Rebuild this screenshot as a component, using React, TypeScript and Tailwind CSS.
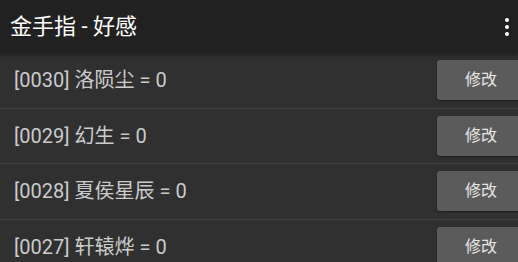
import React from 'react';

const ITEMS = [
  { id: '0030', name: '洛陨尘', value: 0 },
  { id: '0029', name: '幻生', value: 0 },
  { id: '0028', name: '夏侯星辰', value: 0 },
  { id: '0027', name: '轩辕烨', value: 0 },
];

const App: React.FC = () => {
  return (
    <div
      className="h-[262px] w-[518px] overflow-hidden bg-[#303030]"
      style={{ fontFamily: 'Roboto, "Noto Sans CJK SC", sans-serif' }}
    >
      <div className="relative z-10 flex h-[53px] items-center justify-between bg-[#212121] pl-[10px] pr-[9px] shadow-[0_2px_4px_rgba(0,0,0,0.35)]">
        <h1 className="text-[22px] text-white">金手指 - 好感</h1>
        <div className="flex flex-col gap-[3px]">
          {[...Array(3)].map((_, i) => (
            <span key={i} className="block h-[4px] w-[4px] rounded-full bg-white"></span>
          ))}
        </div>
      </div>
      <ul>
        {ITEMS.map((item) => (
          <li
            key={item.id}
            className="flex h-[55.5px] items-center justify-between border-b border-[#424242] pl-[14px]"
          >
            <span className="text-[20px] text-[#cbcbcb]">
              [{item.id}] {item.name} = {item.value}
            </span>
            <button className="mr-[-7px] h-[40px] w-[88px] rounded-[3px] bg-[#5b5b5b] text-[16px] text-[#e6e6e6] shadow-[0_1px_2px_rgba(0,0,0,0.4)]">
              修改
            </button>
          </li>
        ))}
      </ul>
    </div>
  );
};

export default App;
